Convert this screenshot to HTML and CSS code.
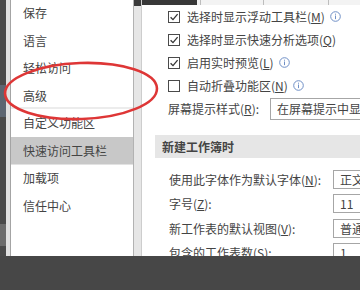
FILE: index.html
```html
<!DOCTYPE html>
<html lang="zh-CN">
<head>
<meta charset="utf-8">
<link rel="stylesheet" href="styles.css">
</head>
<body>
<div class="screen">
  <div class="dialog">
    <div class="edge"><div class="edge-dark"></div><div class="edge-light"></div></div>
    <nav class="nav">
      <div class="nav-list">
        <div class="nav-item">保存</div>
        <div class="nav-item">语言</div>
        <div class="nav-item">轻松访问</div>
        <div class="nav-item sep">高级</div>
        <div class="nav-item">自定义功能区</div>
        <div class="nav-item active">快速访问工具栏</div>
        <div class="nav-item">加载项</div>
        <div class="nav-item">信任中心</div>
      </div>
    </nav>
    <div class="track"></div>
    <main class="content">
      <div class="topband">
        <div class="tb-dark"></div><div class="tb-gap"></div><div class="tb-cell w63"></div><div class="tb-cell w65"></div><div class="tb-cell wrest"></div>
      </div>
      <div class="opts">
        <div class="opt">
          <svg class="cb" width="12" height="12" viewBox="0 0 12 12"><rect x="0.5" y="0.5" width="11" height="11" fill="#fff" stroke="#4a4a4a"/><path d="M2.6 6.2 L5 8.6 L9.6 3.2" fill="none" stroke="#333" stroke-width="1.3"/></svg>
          <span class="lbl">选择时显示浮动工具栏(<u>M</u>)</span>
          <svg class="info" width="11" height="11" viewBox="0 0 11 11"><circle cx="5.5" cy="5.5" r="4.8" fill="none" stroke="#6f8fc6"/><rect x="5" y="4.5" width="1" height="3.6" fill="#6f8fc6"/><rect x="5" y="2.7" width="1" height="1" fill="#6f8fc6"/></svg>
        </div>
        <div class="opt">
          <svg class="cb" width="12" height="12" viewBox="0 0 12 12"><rect x="0.5" y="0.5" width="11" height="11" fill="#fff" stroke="#4a4a4a"/><path d="M2.6 6.2 L5 8.6 L9.6 3.2" fill="none" stroke="#333" stroke-width="1.3"/></svg>
          <span class="lbl">选择时显示快速分析选项(<u>Q</u>)</span>
        </div>
        <div class="opt">
          <svg class="cb" width="12" height="12" viewBox="0 0 12 12"><rect x="0.5" y="0.5" width="11" height="11" fill="#fff" stroke="#4a4a4a"/><path d="M2.6 6.2 L5 8.6 L9.6 3.2" fill="none" stroke="#333" stroke-width="1.3"/></svg>
          <span class="lbl">启用实时预览(<u>L</u>)</span>
          <svg class="info" width="11" height="11" viewBox="0 0 11 11"><circle cx="5.5" cy="5.5" r="4.8" fill="none" stroke="#6f8fc6"/><rect x="5" y="4.5" width="1" height="3.6" fill="#6f8fc6"/><rect x="5" y="2.7" width="1" height="1" fill="#6f8fc6"/></svg>
        </div>
        <div class="opt">
          <svg class="cb" width="12" height="12" viewBox="0 0 12 12"><rect x="0.5" y="0.5" width="11" height="11" fill="#fff" stroke="#4a4a4a"/></svg>
          <span class="lbl">自动折叠功能区(<u>N</u>)</span>
          <svg class="info" width="11" height="11" viewBox="0 0 11 11"><circle cx="5.5" cy="5.5" r="4.8" fill="none" stroke="#6f8fc6"/><rect x="5" y="4.5" width="1" height="3.6" fill="#6f8fc6"/><rect x="5" y="2.7" width="1" height="1" fill="#6f8fc6"/></svg>
        </div>
        <div class="opt">
          <span class="lbl-plain">屏幕提示样式(<u>R</u>):</span>
          <div class="select wide">在屏幕提示中显示功能说明</div>
        </div>
      </div>
      <div class="section">新建工作簿时</div>
      <div class="form">
        <div class="frow"><span class="flbl">使用此字体作为默认字体(<u>N</u>):</span><div class="select box">正文字体</div></div>
        <div class="frow"><span class="flbl">字号(<u>Z</u>):</span><div class="select box">11</div></div>
        <div class="frow"><span class="flbl">新工作表的默认视图(<u>V</u>):</span><div class="select box">普通视图</div></div>
        <div class="frow"><span class="flbl">包含的工作表数(<u>S</u>):</span><div class="select box">1</div></div>
      </div>
    </main>
  </div>
  <div class="taskbar"></div>
  <svg class="mark" width="360" height="290" viewBox="0 0 360 290"><ellipse cx="81" cy="91" rx="76" ry="28" transform="rotate(-2 81 91)" fill="none" stroke="#de3636" stroke-width="2.6"/></svg>
</div>
</body>
</html>
```

FILE: styles.css
```css
* { box-sizing: border-box; }
html, body { margin: 0; padding: 0; }
body {
  background: #474747;
  font-family: "Noto Sans CJK SC", "Noto Sans", sans-serif;
  font-size: 12px;
  color: #444;
}
.screen {
  position: relative;
  width: 360px;
  height: 290px;
  overflow: hidden;
}
.dialog {
  display: flex;
  height: 256px;
  background: #fff;
}
.edge {
  display: flex;
  width: 11px;
  flex: none;
}
.edge-dark {
  width: 6px;
  background: linear-gradient(to bottom, #4a4a4a 0 85px, #5c6571 85px 117px, #4a4a4a 117px 224px, #6c6c6c 224px 246px, #4a4a4a 246px);
}
.edge-light {
  width: 5px;
  background: #e1e1e1;
  border-right: 1px solid #a4a4a4;
}
.nav {
  width: 123px;
  flex: none;
  background: #fff;
  border-right: 1px solid #b2b2b2;
  overflow: hidden;
}
.nav-list { margin-top: -1px; }
.nav-item {
  height: 27.5px;
  line-height: 27.5px;
  padding-left: 12px;
  color: #444;
  white-space: nowrap;
}
.nav-item.sep { box-shadow: inset 0 -2px 0 #ececec; }
.nav-item.active {
  background: #c8c8c8;
  box-shadow: 0 1px 0 #e2e2e2;
}
.track {
  width: 8px;
  flex: none;
  background: linear-gradient(to bottom, #3a3a3a 0 6px, #e6e6e6 6px);
  border-right: 1px solid #cdcdcd;
}
.content {
  flex: 1;
  display: flex;
  flex-direction: column;
  overflow: hidden;
}
.topband {
  display: flex;
  height: 5px;
  flex: none;
}
.tb-dark { width: 55px; background: #383838; }
.tb-gap { width: 3px; background: #f3f3f3; }
.tb-cell { background: #f3f3f3; border-left: 1px solid #bdbdbd; }
.w63 { width: 63px; }
.w65 { width: 65px; }
.wrest { flex: 1; }
.opts { padding-left: 26px; }
.opt {
  display: flex;
  align-items: center;
  height: 23px;
  white-space: nowrap;
}
.cb { flex: none; margin-right: 7px; }
.lbl { margin-right: 5px; }
.info { flex: none; }
.lbl-plain { width: 102px; flex: none; }
.select {
  height: 22px;
  border: 1px solid #a6a6a6;
  padding-left: 6px;
  display: flex;
  align-items: center;
  white-space: nowrap;
  overflow: hidden;
  background: #fff;
}
.select.wide { width: 140px; flex: none; }
.section {
  margin: 15px 0 0 13px;
  height: 23px;
  line-height: 23px;
  background: #e6e6e6;
  padding-left: 7px;
  font-weight: bold;
  color: #444;
}
.form { margin-top: 9px; padding-left: 27px; }
.frow {
  display: flex;
  align-items: center;
  height: 24.5px;
  white-space: nowrap;
}
.flbl { width: 164px; flex: none; }
.select.box { height: 19px; width: 60px; flex: none; }
.taskbar { height: 34px; background: #474747; }
.mark {
  position: absolute;
  left: 0;
  top: 0;
  pointer-events: none;
}
```
